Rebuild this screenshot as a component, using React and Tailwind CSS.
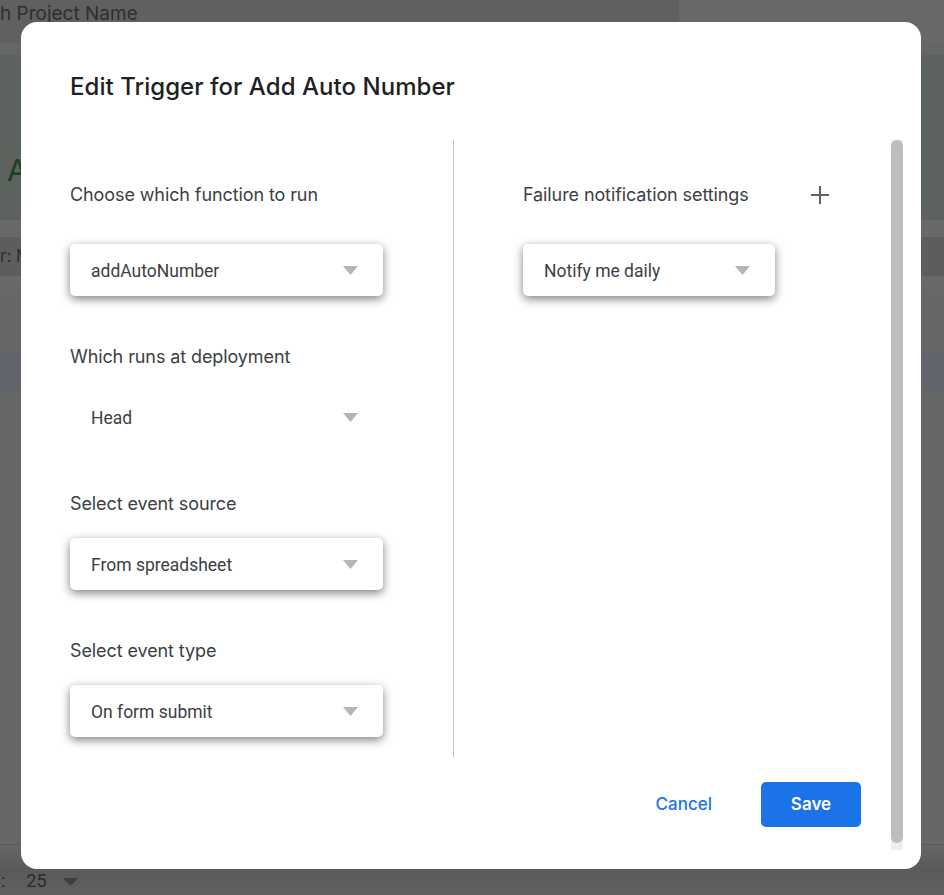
const labelClass = "h-6 text-[18px] leading-6 text-[#3c4043] font-['Inter',sans-serif] tracking-[-0.1px] whitespace-nowrap";

const Arrow = () => (
  <svg width="15" height="9" viewBox="0 0 15 9" className="shrink-0">
    <path d="M0 0h15L7.5 9z" fill="#b5b5b5" />
  </svg>
);

const Select = ({ value, width = "w-[313px]", plain }) => (
  <div
    className={`${width} h-[52px] flex items-center justify-between pl-[21px] pr-[25px] bg-white rounded-[5px] ${
      plain ? "" : "shadow-[0_3px_10px_rgba(0,0,0,0.5)]"
    }`}
  >
    <span className="pt-[2px] text-[17.5px] text-[#3c4043] font-['Roboto',sans-serif]">
      {value}
    </span>
    <Arrow />
  </div>
);

const Page = () => (
  <div className="w-[944px] h-[895px] overflow-hidden flex flex-col bg-[#666666] font-['Inter',sans-serif]">
    <div className="h-[43px] flex shrink-0">
      <div className="w-[679px] bg-[#5f6060] pt-[1px] text-[19px] leading-[26px] text-[#2f2f2f] whitespace-nowrap">
        h Project Name
      </div>
      <div className="flex-1 bg-[#686868]" />
    </div>
    <div className="h-[12px] shrink-0 bg-[#656766]" />
    <div className="h-[165px] shrink-0 bg-[#5c625d] pt-[98px] pl-[7px] text-[30px] leading-[34px] text-[#173f25]">
      A
    </div>
    <div className="h-[17px] shrink-0 bg-[#696969]" />
    <div className="h-[39px] shrink-0 bg-[#5d5d5d] flex items-center text-[17px] text-[#2f2f2f] whitespace-nowrap">
      r: M
    </div>
    <div className="h-[14px] shrink-0 bg-[#696969]" />
    <div className="h-[63px] shrink-0 bg-[#676767]" />
    <div className="h-[40px] shrink-0 bg-[#62646b]" />
    <div className="h-[451px] shrink-0 bg-[#676767]" />
    <div className="flex-1 border-t border-[#5c5c5c] bg-gradient-to-b from-[#666666] via-[#5a5a5a] to-[#606060] flex items-end pb-[2px] pl-[1px] text-[18px] leading-[24px] text-[#2a2a2a] whitespace-nowrap">
      <span className="font-['Roboto',sans-serif]">:</span>
      <span className="ml-[21px] font-['Roboto',sans-serif]">25</span>
      <svg width="15" height="8" viewBox="0 0 15 8" className="ml-[16px] mb-[7px]">
        <path d="M0 0h15L7.5 8z" fill="#3e3e3e" />
      </svg>
    </div>
  </div>
);

const App = () => {
  return (
    <div className="relative w-[944px] h-[895px] overflow-hidden">
      <Page />
      <div className="absolute left-[21px] top-[22px] w-[900px] h-[847px] bg-white rounded-[16px] flex flex-col">
        <h1 className="h-[118px] shrink-0 pl-[49px] pt-[47px] text-[24px] leading-[36px] font-medium text-[#202124] font-['Inter',sans-serif] tracking-[0.05px] whitespace-nowrap">
          Edit Trigger for Add Auto Number
        </h1>

        <div className="flex flex-1 min-h-0">
          <div className="w-[870px] shrink-0 pl-[49px] flex flex-col">
            <div className="h-[617px] flex shrink-0">
              <div className="w-[384px] shrink-0 border-r border-[#c4c4c4] pt-[43px]">
                <p className={labelClass}>Choose which function to run</p>
                <div className="mt-[37px]">
                  <Select value="addAutoNumber" />
                </div>

                <p className={`${labelClass} mt-[49px]`}>Which runs at deployment</p>
                <div className="mt-[22px]">
                  <Select value="Head" plain />
                </div>

                <p className={`${labelClass} mt-[49px]`}>Select event source</p>
                <div className="mt-[22px]">
                  <Select value="From spreadsheet" />
                </div>

                <p className={`${labelClass} mt-[49px]`}>Select event type</p>
                <div className="mt-[22px]">
                  <Select value="On form submit" />
                </div>
              </div>

              <div className="pl-[69px] pt-[43px]">
                <div className="flex items-center w-[306px] justify-between">
                  <p className={labelClass}>Failure notification settings</p>
                  <svg width="18" height="18" viewBox="0 0 18 18">
                    <path d="M9 0v18M0 9h18" stroke="#5f6368" strokeWidth="2" fill="none" />
                  </svg>
                </div>
                <div className="mt-[37px]">
                  <Select value="Notify me daily" width="w-[252px]" />
                </div>
              </div>
            </div>

            <div className="flex justify-end items-center gap-[49px] mt-[25px] pr-[30px]">
              <button className="text-[17px] font-medium text-[#1a73e8] font-['Inter',sans-serif]">
                Cancel
              </button>
              <button className="w-[100px] h-[45px] rounded-[5px] bg-[#1a73e8] text-white text-[17px] font-semibold font-['Inter',sans-serif]">
                Save
              </button>
            </div>
          </div>

          <div className="w-3 h-[710px] shrink-0 bg-[#eeeeee]">
            <div className="h-[703px] rounded-full bg-[#bdbdbd]" />
          </div>
        </div>
      </div>
    </div>
  );
};

export default App;
